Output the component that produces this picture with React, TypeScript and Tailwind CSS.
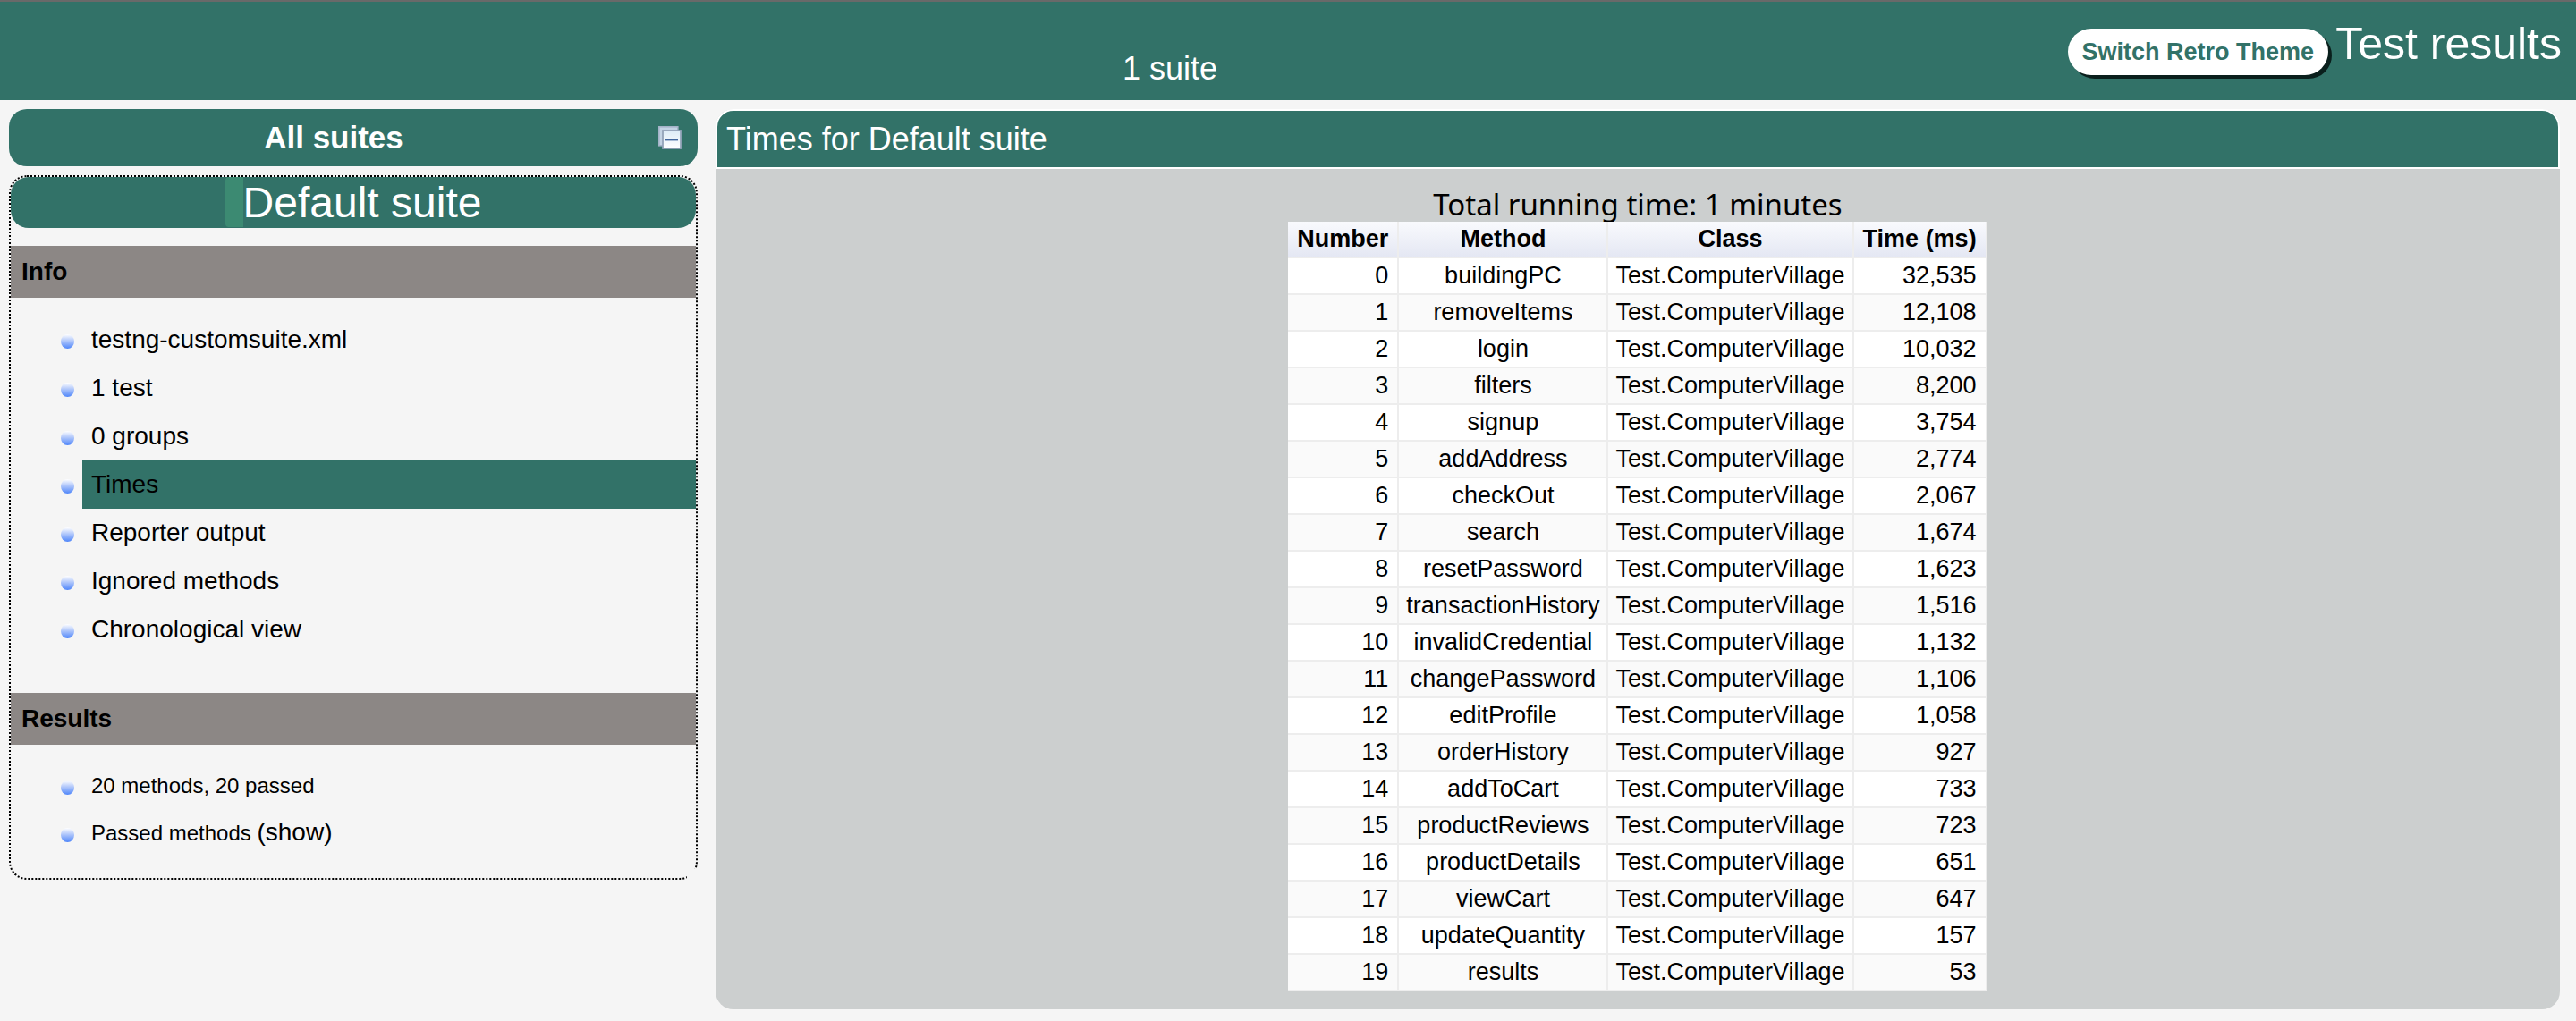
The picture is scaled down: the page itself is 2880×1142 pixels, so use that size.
import React from "react";

const rows: [string, string][] = [
  ["buildingPC", "32,535"],
  ["removeItems", "12,108"],
  ["login", "10,032"],
  ["filters", "8,200"],
  ["signup", "3,754"],
  ["addAddress", "2,774"],
  ["checkOut", "2,067"],
  ["search", "1,674"],
  ["resetPassword", "1,623"],
  ["transactionHistory", "1,516"],
  ["invalidCredential", "1,132"],
  ["changePassword", "1,106"],
  ["editProfile", "1,058"],
  ["orderHistory", "927"],
  ["addToCart", "733"],
  ["productReviews", "723"],
  ["productDetails", "651"],
  ["viewCart", "647"],
  ["updateQuantity", "157"],
  ["results", "53"],
];

const infoLinks = [
  "testng-customsuite.xml",
  "1 test",
  "0 groups",
  "Times",
  "Reporter output",
  "Ignored methods",
  "Chronological view",
];

function Bullet() {
  return (
    <svg viewBox="0 0 16 16" className="mt-1 h-4 w-4 shrink-0" aria-hidden="true">
      <defs>
        <linearGradient id="bullet" x1="0" y1="0" x2="0" y2="1">
          <stop offset="0" stopColor="#ffffff" />
          <stop offset="0.4" stopColor="#b9cdfb" />
          <stop offset="1" stopColor="#4f86fa" />
        </linearGradient>
      </defs>
      <ellipse cx="7.5" cy="8" rx="7.5" ry="8" fill="url(#bullet)" />
    </svg>
  );
}

function CollapseIcon() {
  return (
    <svg viewBox="0 0 26 26" className="h-[26px] w-[26px]" aria-hidden="true">
      <defs>
        <linearGradient id="sheet" x1="0" y1="0" x2="0" y2="1">
          <stop offset="0" stopColor="#dcebf7" />
          <stop offset="1" stopColor="#ffffff" />
        </linearGradient>
      </defs>
      <rect x="0.8" y="0.8" width="21" height="21" fill="#c3d3e4" stroke="#a4b3c8" strokeWidth="1.6" />
      <rect x="5" y="5" width="20" height="20" fill="url(#sheet)" stroke="#93a3b9" strokeWidth="1.8" />
      <rect x="8" y="14" width="14" height="2.4" fill="#41669d" />
    </svg>
  );
}

function SectionTitle({ children }: { children: React.ReactNode }) {
  return (
    <h3 className="bg-[#8c8785] px-3 py-[14px] text-[28px] leading-[30px] font-bold">{children}</h3>
  );
}

export default function App() {
  return (
    <div className="min-h-screen bg-[#f5f5f5] pb-3 font-['Liberation_Sans',Arial,sans-serif] text-black">
      <header className="grid h-28 grid-cols-[1fr_auto_1fr] border-t-2 border-[#696969] bg-[#327268] text-white">
        <span />
        <span className="pt-[54px] pr-[264px] text-[36px] leading-[42px]">1 suite</span>
        <div className="flex items-start justify-end pr-4">
          <button
            type="button"
            className="mt-[30px] mr-2 h-[52px] rounded-[26px] bg-white px-4 text-[27px] leading-8 font-bold text-[#327268] shadow-[4px_4px_0_#0a1f1c]"
          >
            Switch Retro Theme
          </button>
          <h1 className="pt-[18px] text-[50px] leading-[58px]">Test results</h1>
        </div>
      </header>

      <div className="flex items-start gap-5 pt-[10px] pr-[18px] pl-[10px]">
        <nav className="w-[770px] shrink-0">
          <div className="flex h-16 items-center rounded-[20px] bg-[#327268] pr-[18px] text-white">
            <h2 className="grow text-center text-[35px] leading-10 font-bold">All suites</h2>
            <button type="button" aria-label="Collapse all suites">
              <CollapseIcon />
            </button>
          </div>

          <section className="relative mt-[10px] rounded-[20px] border-2 border-dotted border-black pb-6">
            <div className="flex h-[57px] justify-center rounded-[20px] bg-[#327268] text-white">
              <span className="h-14 w-5 rounded-l bg-[#3c8a72]" />
              <a href="#suite" className="text-[48px] leading-[58px]">Default suite</a>
            </div>
            <div className="mt-5">
              <SectionTitle>Info</SectionTitle>
              <ul className="pt-5 pb-[44px] text-[28px] leading-[34px]">
                {infoLinks.map((label) => (
                  <li key={label} className="flex items-center pl-14">
                    <Bullet />
                    <a
                      href={"#" + label}
                      className={
                        label === "Times"
                          ? "ml-2 grow bg-[#327268] py-[10px] pl-[10px]"
                          : "ml-2 grow py-[10px] pl-[10px]"
                      }
                    >
                      {label}
                    </a>
                  </li>
                ))}
              </ul>
              <SectionTitle>Results</SectionTitle>
              <ul className="pt-5 text-2xl leading-8">
                <li className="flex items-center pl-14">
                  <Bullet />
                  <span className="py-[10px] pl-[18px]">20 methods, 20 passed</span>
                </li>
                <li className="flex items-center pl-14">
                  <Bullet />
                  <span className="py-[10px] pl-[18px]">
                    Passed methods{" "}
                    <a href="#passed" className="text-[28px]">(show)</a>
                  </span>
                </li>
              </ul>
            </div>
            <span className="absolute -right-0.5 -bottom-0.5 h-3 w-3 bg-[#f5f5f5]" />
          </section>
        </nav>

        <main className="grow rounded-[20px] bg-[#cccfcf] pb-5">
          <h2 className="rounded-t-[20px] border-2 border-white bg-[#327268] py-3 pl-[10px] text-[36px] leading-[39px] text-white">
            Times for Default suite
          </h2>
          <div className="flex flex-col items-center pt-[21px]">
            <p className="font-['Noto_Sans','Open_Sans',sans-serif] text-[33px] leading-[38px]">
              Total running time: 1 minutes
            </p>
            <table className="border-collapse text-[27px] leading-[29px]">
              <thead>
                <tr className="bg-linear-to-b from-[#f9fafd] to-[#e4e7f3]">
                  <th className="border-r-2 border-b-2 border-[#ededed] px-[10px] py-[5px]">Number</th>
                  <th className="border-r-2 border-b-2 border-[#ededed] px-2 py-[5px]">Method</th>
                  <th className="border-r-2 border-b-2 border-[#ededed] px-2 py-[5px]">Class</th>
                  <th className="border-r-2 border-b-2 border-[#ededed] px-[10px] py-[5px]">Time (ms)</th>
                </tr>
              </thead>
              <tbody>
                {rows.map(([method, time], i) => (
                  <tr key={method} className="bg-white even:bg-[#fafafa]">
                    <td className="border-r-2 border-b-2 border-[#ededed] px-[10px] py-[5px] text-right">{i}</td>
                    <td className="border-r-2 border-b-2 border-[#ededed] px-2 py-[5px] text-center">{method}</td>
                    <td className="border-r-2 border-b-2 border-[#ededed] px-2 py-[5px] text-center">Test.ComputerVillage</td>
                    <td className="border-r-2 border-b-2 border-[#ededed] px-[10px] py-[5px] text-right">{time}</td>
                  </tr>
                ))}
              </tbody>
            </table>
          </div>
        </main>
      </div>
    </div>
  );
}
